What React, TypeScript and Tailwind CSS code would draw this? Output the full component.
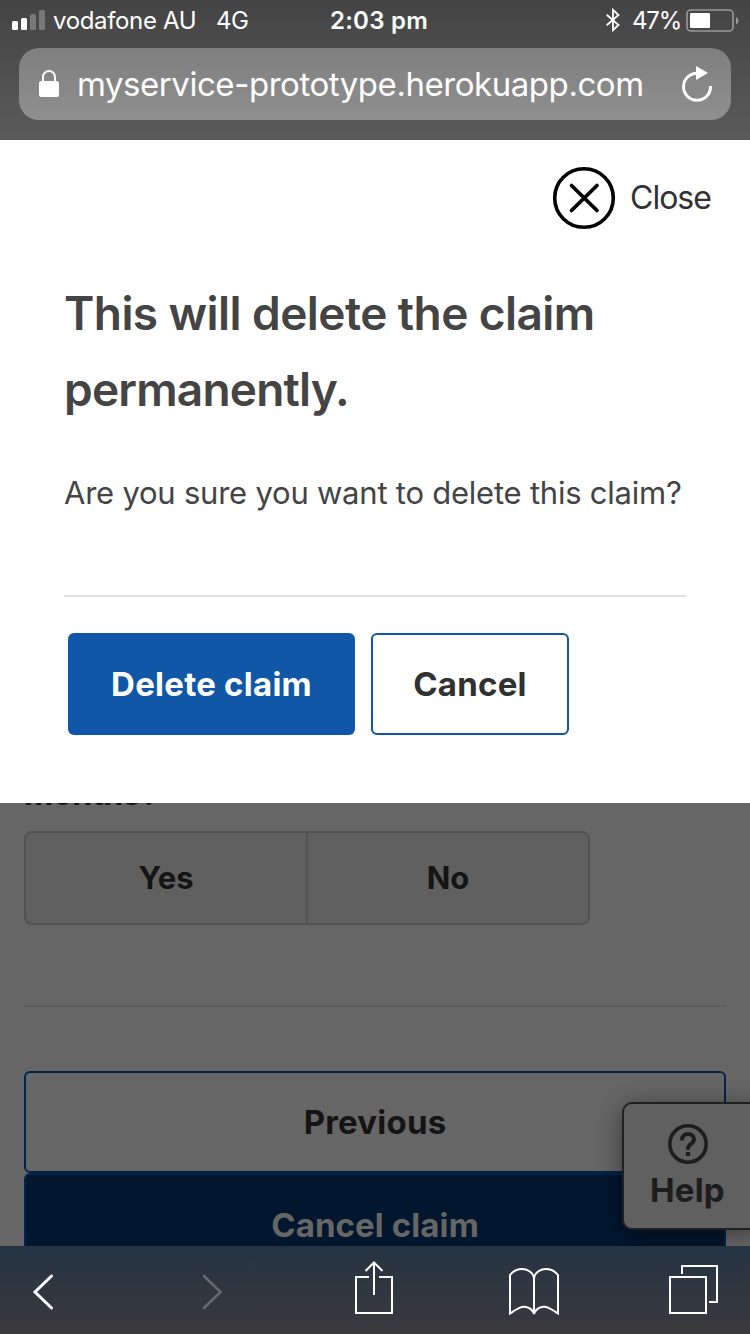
import type { ReactNode } from "react";

function StatusBar() {
  return (
    <div className="flex h-[48px] items-start pt-[3px] text-[24px] leading-[36px] whitespace-nowrap">
      <svg className="mt-[7px] ml-[12px] shrink-0" width="34" height="20" viewBox="0 0 34 20" fill="#fff">
        <rect x="0" y="11" width="6" height="9" rx="1.5" />
        <rect x="9" y="8" width="6" height="12" rx="1.5" />
        <rect x="18" y="4" width="6" height="16" rx="1.5" opacity=".27" />
        <rect x="27" y="0" width="6" height="20" rx="1.5" opacity=".27" />
      </svg>
      <span className="ml-[7px] w-[163px] tracking-[-0.35px]">vodafone AU</span>
      <span className="w-[114px] tracking-[-0.5px]">4G</span>
      <span className="w-[276px] font-semibold tracking-[0.25px]">2:03 pm</span>
      <svg className="mt-[5px] shrink-0" width="14" height="24" viewBox="0 0 14 24" fill="none" stroke="#fff" strokeWidth="1.8">
        <path d="M.7 6.7 12.5 17 7 22.2V1.8L12.5 7 .7 17.3" />
      </svg>
      <span className="ml-[12px] w-[54px] tracking-[-1.2px]">47%</span>
      <svg className="mt-[6px] shrink-0" width="54" height="24" viewBox="0 0 54 24">
        <rect x="1" y="1" width="46" height="21" rx="4" fill="none" stroke="#999" strokeWidth="1.6" />
        <rect x="4" y="4" width="20" height="15" rx="1" fill="#fff" />
        <path d="M50 8q2.500 1 2.500 3.700T50 15.500z" fill="#999" />
      </svg>
    </div>
  );
}

function AddressBar() {
  return (
    <div className="mx-[19px] flex h-[72px] items-center rounded-[20px] bg-linear-to-b from-[#7f7f7f] to-[#8f8f8f]">
      <svg className="ml-[20px] shrink-0" width="20" height="28" viewBox="0 0 20 28">
        <path d="M4 13V7a6 6 0 0 1 12 0v6" fill="none" stroke="#fff" strokeWidth="2" />
        <rect y="11" width="20" height="16" rx="2.5" fill="#fff" />
      </svg>
      <span className="ml-[18px] w-[603px] text-[33px] leading-[40px] tracking-[-0.45px] whitespace-nowrap">
        myservice-prototype.herokuapp.com
      </span>
      <svg className="shrink-0" width="34" height="38" viewBox="0 0 34 38" fill="none">
        <path d="M18 8.3A13.5 13.5 0 1 0 30.500 21" stroke="#fff" strokeWidth="3" />
        <path d="M16 1v14l12-7z" fill="#fff" />
      </svg>
    </div>
  );
}

function Dialog() {
  return (
    <section className="flex h-[663px] shrink-0 flex-col bg-white text-[#444]">
      <div className="mt-[26px] ml-[552px] flex h-[64px] items-center">
        <svg className="shrink-0" width="64" height="64" viewBox="0 0 64 64" fill="none" stroke="#000" strokeLinecap="round">
          <circle cx="32" cy="32" r="29.3" strokeWidth="3.6" />
          <path d="m19.5 19.5 25.5 25M45 19.5l-25.5 25" strokeWidth="3.8" />
        </svg>
        <span className="ml-[14px] text-[32px] leading-[40px] tracking-[-1px] text-[#313131]">Close</span>
      </div>
      <h1 className="mt-[45px] ml-[64px] text-[46px] leading-[76px] font-semibold whitespace-nowrap">
        <span className="block tracking-[-0.57px]">This will delete the claim</span>
        <span className="block tracking-[-0.8px]">permanently.</span>
      </h1>
      <p className="mt-[46px] ml-[64px] text-[31px] leading-[40px] tracking-[-0.23px] whitespace-nowrap">
        Are you sure you want to delete this claim?
      </p>
      <div className="mx-[64px] mt-[82px] h-[2px] shrink-0 bg-[#e0e0e0]" />
      <div className="mt-[36px] ml-[68px] flex gap-[16px] text-[33px] font-bold tracking-[0.25px]">
        <button className="h-[102px] w-[287px] rounded-[6px] bg-[#1157a8] pt-[2px] text-white">Delete claim</button>
        <button className="h-[102px] w-[198px] rounded-[6px] border-2 border-[#1157a8] pt-[2px] text-[#313131]">Cancel</button>
      </div>
    </section>
  );
}

function Page() {
  return (
    <section className="relative h-[443px] shrink-0 overflow-hidden bg-[#666] px-[24px] text-[#141414]">
      <div className="-mt-[29px] h-[57px] text-[32px] leading-[40px] font-bold tracking-[-0.3px]">months?</div>
      <div className="flex h-[94px] w-[566px] rounded-[8px] border-2 border-[#525252] bg-[#606060] text-[31px] font-bold">
        <button className="w-[282px] border-r-2 border-[#525252]">Yes</button>
        <button className="flex-1">No</button>
      </div>
      <div className="mt-[80px] h-[2px] bg-[#5d5d5d]" />
      <div className="mt-[64px] flex flex-col text-[33px] font-bold tracking-[0.2px]">
        <button className="h-[102px] rounded-[6px] border-2 border-[#032448] pt-[2px]">Previous</button>
        <button className="h-[102px] rounded-[6px] border-2 border-[#032448] bg-[#02162e] pt-[4px] tracking-[0.1px] text-[#666]">Cancel claim</button>
      </div>
      <div className="absolute top-[299px] left-[622px] flex h-[128px] w-[138px] flex-col rounded-[10px] border-2 border-[#212121] bg-[#606060] text-[#1d1d1d] shadow-[0_4px_24px_rgba(0,0,0,0.45)]">
        <svg className="mt-[20px] ml-[44px] shrink-0" width="40" height="40" viewBox="0 0 40 40" fill="none" stroke="#1d1d1d">
          <circle cx="20" cy="20" r="18.2" strokeWidth="3.6" />
          <path d="M14 16.4v-.8c0-3.200 2.500-5.600 6-5.600s6 2.200 6 5.300c0 5-6 4.500-6 9v1.500" strokeWidth="4" />
          <path d="M20 28v4" strokeWidth="4.2" />
        </svg>
        <span className="mt-[6px] ml-[26px] text-[33px] leading-[40px] font-bold tracking-[0.2px]">Help</span>
      </div>
    </section>
  );
}

function Glyph({ className, width, height, children }: { className: string; width: number; height: number; children: ReactNode }) {
  return (
    <svg className={className} width={width} height={height} viewBox={`0 0 ${width} ${height}`} fill="none" stroke="#fff" strokeWidth="2">
      {children}
    </svg>
  );
}

function Toolbar() {
  return (
    <nav className="flex h-[88px] shrink-0 items-start bg-linear-to-b from-[#253341] via-[#303741] via-50% to-[#38383b]">
      <Glyph className="mt-[27px] ml-[32px] shrink-0" width={22} height={38}>
        <path d="M19.5 3 3 19l16.500 16" strokeWidth="3" strokeLinecap="round" />
      </Glyph>
      <Glyph className="mt-[27px] ml-[147px] shrink-0" width={22} height={38}>
        <path d="M3 3l16.500 16L3 35" stroke="#646a70" strokeWidth="2.6" strokeLinecap="round" />
      </Glyph>
      <Glyph className="mt-[14px] ml-[132px] shrink-0" width={38} height={56}>
        <path d="M14 17H1v36h36V17H24M19 35V3M10.500 11 19 2.500 27.500 11" />
      </Glyph>
      <Glyph className="mt-[21px] ml-[116px] shrink-0" width={50} height={50}>
        <path d="M25 11v36c-1-3-3-6-8-7-5-1-9 2-16 6.500V8C4 4 8 2 13 2s11 3 12 9c1-6 7-9 12-9s9 2 12 6v38.500C42 42 38 39 33 40c-5 1-7 4-8 7" />
      </Glyph>
      <Glyph className="mt-[18px] ml-[110px] shrink-0" width={50} height={52}>
        <path d="M1 13h36v36H1zM13 10V2h35v36h-8" />
      </Glyph>
    </nav>
  );
}

export default function App() {
  return (
    <main className="flex h-[1334px] w-[750px] flex-col overflow-hidden font-['Inter','Liberation_Sans',sans-serif]">
      <header className="h-[140px] shrink-0 bg-linear-to-b from-[#444] to-[#5a5a5a] text-white">
        <StatusBar />
        <AddressBar />
      </header>
      <Dialog />
      <Page />
      <Toolbar />
    </main>
  );
}
